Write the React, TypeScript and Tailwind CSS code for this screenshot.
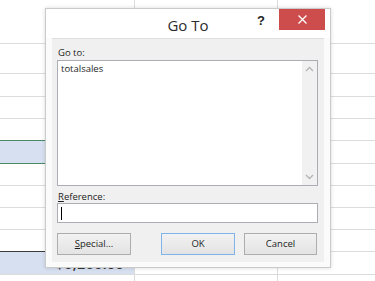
import React from "react";

const rowHeights = [44, 30, 23, 22, 22, 23, 22, 22, 22, 22, 23, 10];

function Cell({ w, className = "", children }: { w: string; className?: string; children?: React.ReactNode }) {
  return <div className={`${w} h-full shrink-0 border-r border-b border-[#dcdcdc] ${className}`}>{children}</div>;
}

export default function App() {
  const font = { fontFamily: '"Open Sans", "Noto Sans", Arial, sans-serif' };
  return (
    <div className="relative w-[375px] h-[281px] overflow-hidden bg-white" style={font}>
      {/* spreadsheet grid */}
      <div className="flex flex-col">
        {rowHeights.map((h, i) => {
          let aCls = "";
          if (i === 4) aCls = "!border-b-[#4a8b66]";
          if (i === 5) aCls = "bg-[#d7e0f0] !border-b-[#4a8b66]";
          if (i === 9) aCls = "!border-b-[#3c3c3c]";
          if (i === 10) aCls = "bg-[#d7e0f0]";
          return (
            <div key={i} className="flex" style={{ height: h }}>
              <Cell w="w-[135px]" className={`${aCls} flex items-end justify-end pr-[10px]`}>
                {i === 10 && <span className="text-[14px] font-semibold text-[#333] leading-none mb-[3px] tracking-[0.5px]">$6,266.00</span>}
              </Cell>
              <Cell w="w-[143px]" />
              <Cell w="w-[97px]" className="border-r-0" />
            </div>
          );
        })}
      </div>

      {/* dialog window */}
      <div className="absolute left-[45px] top-[8px] w-[286px] h-[260px] flex flex-col bg-[#fbfbfb] border border-[#cacaca] shadow-[0_0_4px_rgba(0,0,0,0.15)]">
        {/* title bar */}
        <div className="h-[29px] shrink-0 grid grid-cols-[1fr_auto_1fr] bg-white">
          <div />
          <div className="pt-[6px] text-[15px] leading-[20px] text-[#2b2b2b]">Go To</div>
          <div className="flex justify-end items-start pr-[5px]">
            <span className="mt-[5px] mr-[14px] text-[13px] font-bold leading-[14px] text-[#222]" style={{ fontFamily: "Arial, sans-serif" }}>?</span>
            <div className="w-[46px] h-[21px] bg-[#cd4d4d] flex items-center justify-center">
              <svg width="9" height="9" viewBox="0 0 9 9">
                <path d="M0.5 0.5 L8.5 8.5 M8.5 0.5 L0.5 8.5" stroke="#ffffff" strokeWidth="1.3" />
              </svg>
            </div>
          </div>
        </div>

        {/* body */}
        <div className="flex-1 mx-[6px] mb-[5px] bg-[#f0f0f0] border-t border-[#dedede] pl-[5px] pr-[6px] pt-[6px] flex flex-col">
          <div className="h-[15px] text-[9.5px] leading-[15px] text-[#1e1e1e] pl-[1px]">Go to:</div>
          <div className="h-[126px] bg-white border border-[#abadb3] flex">
            <div className="flex-1 pl-[3px] pt-[1px] text-[9.5px] leading-[14px] text-[#1e1e1e]">totalsales</div>
            <div className="w-[15px] bg-[#f1f1f1] flex flex-col justify-between items-center py-[5px]">
              <svg width="9" height="6" viewBox="0 0 9 6">
                <path d="M1 5 L4.5 1.5 L8 5" stroke="#b5b5b5" strokeWidth="1.4" fill="none" />
              </svg>
              <svg width="9" height="6" viewBox="0 0 9 6">
                <path d="M1 1 L4.5 4.5 L8 1" stroke="#b5b5b5" strokeWidth="1.4" fill="none" />
              </svg>
            </div>
          </div>
          <div className="pt-[4px] h-[17px] text-[9.5px] leading-[13px] text-[#1e1e1e] pl-[1px]">
            <span className="underline underline-offset-1">R</span>eference:
          </div>
          <div className="h-[20px] bg-white border border-[#abadb3] flex items-center pl-[3px]">
            <div className="w-[1px] h-[13px] bg-black" />
          </div>
          <div className="mt-[10px] flex">
            <button className="w-[74px] h-[22px] border border-[#adadad] bg-gradient-to-b from-[#f2f2f2] to-[#e3e3e3] text-[9.5px] text-[#1e1e1e]">
              <span className="underline underline-offset-1">S</span>pecial...
            </button>
            <div className="ml-auto flex gap-[9px] pr-[1px]">
              <button className="w-[74px] h-[22px] border border-[#7eb4ea] bg-gradient-to-b from-[#f2f2f2] to-[#e3e3e3] text-[9.5px] text-[#1e1e1e]">OK</button>
              <button className="w-[73px] h-[22px] border border-[#adadad] bg-gradient-to-b from-[#f2f2f2] to-[#e3e3e3] text-[9.5px] text-[#1e1e1e]">Cancel</button>
            </div>
          </div>
        </div>
      </div>
    </div>
  );
}
